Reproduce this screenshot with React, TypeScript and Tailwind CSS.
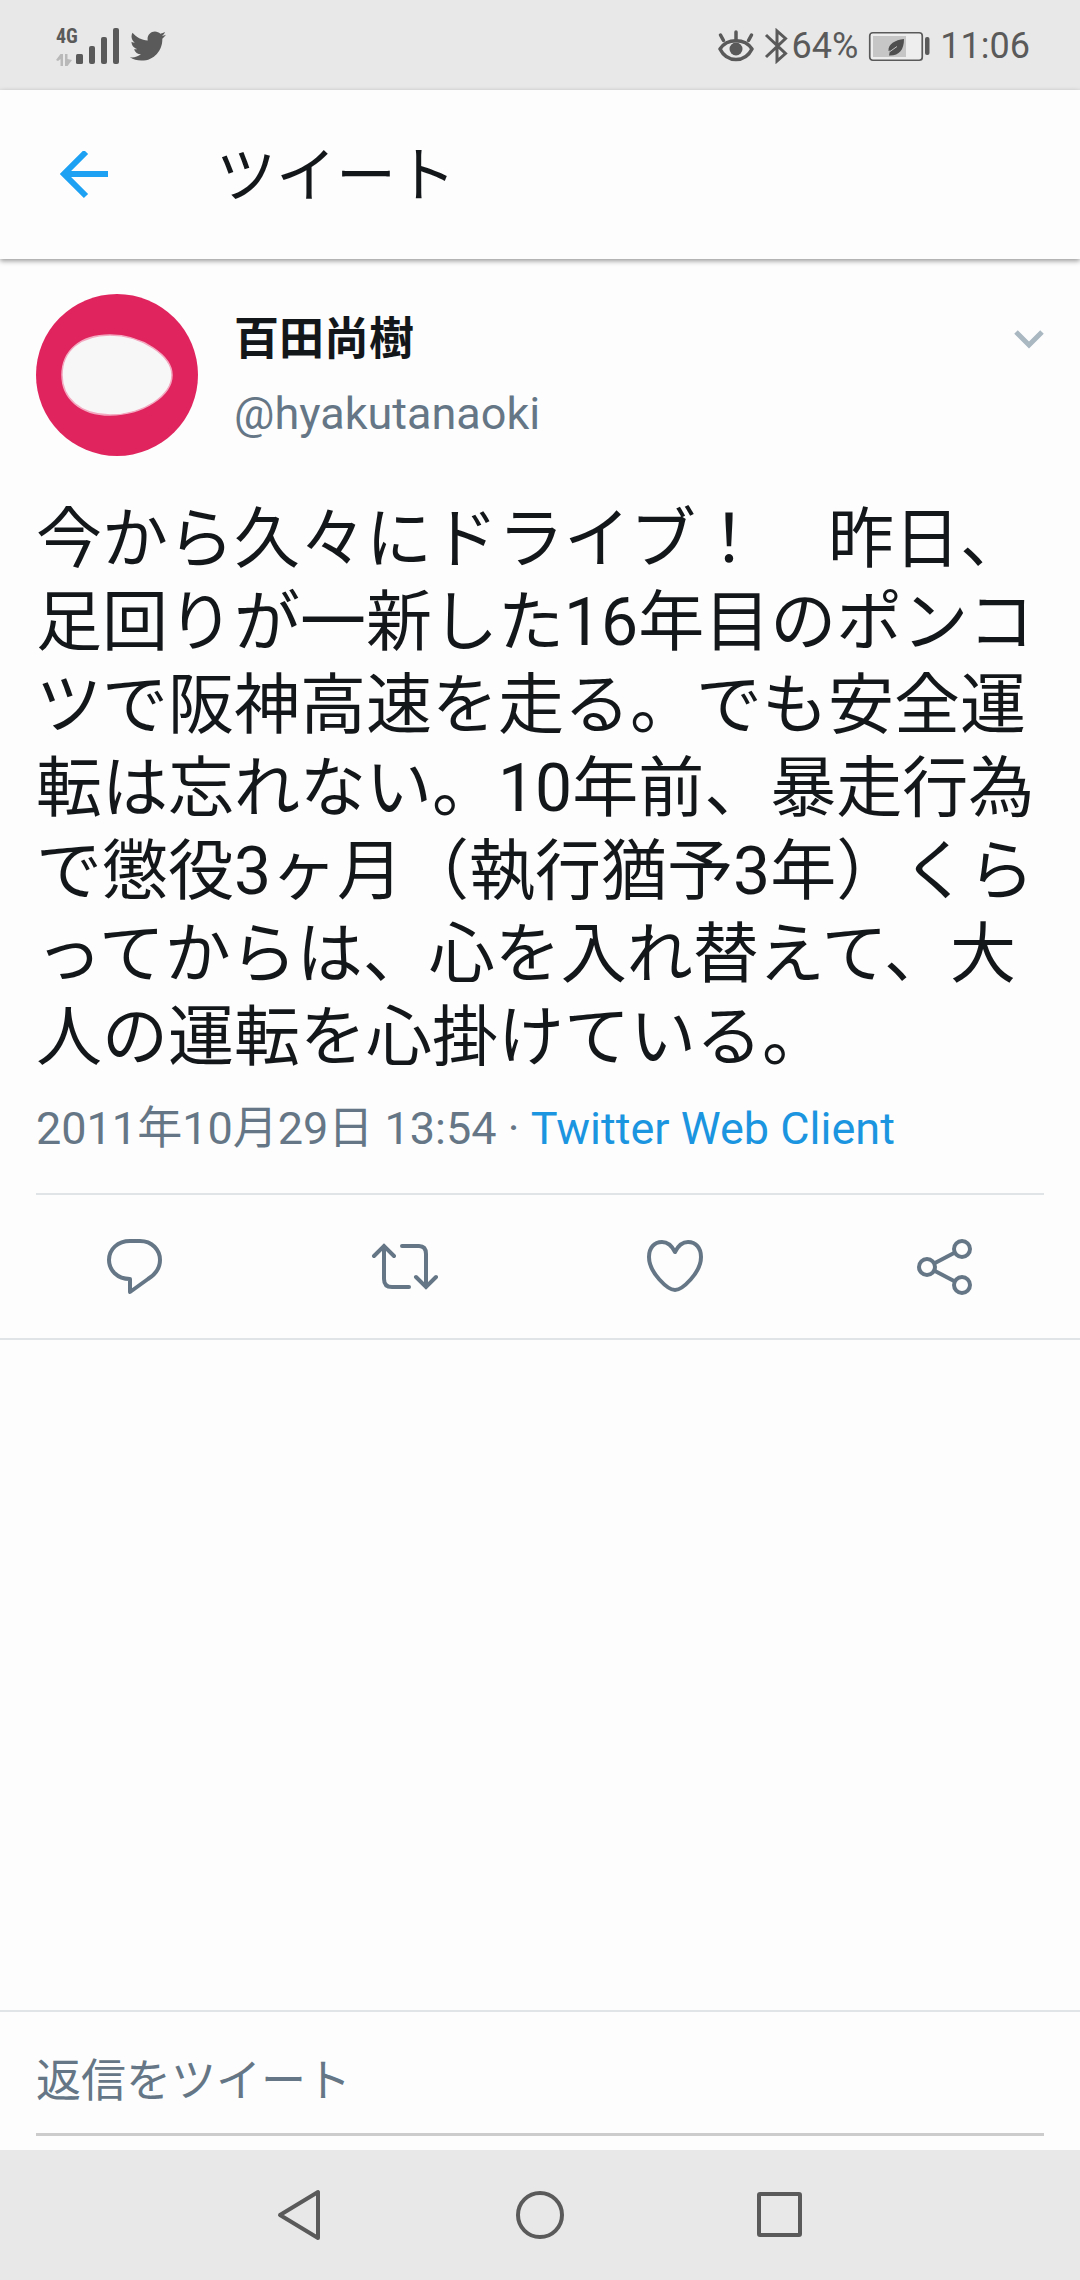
import { useState } from 'react';
import type { ReactNode } from 'react';
import { FaTwitter } from 'react-icons/fa';

interface Action {
  label: string;
  icon: ReactNode;
}

function SignalIcon() {
  return (
    <svg className="h-10 w-11" viewBox="0 0 44 40" fill="#5a5a5a" aria-hidden="true">
      <rect x="0" y="28" width="7" height="10" rx="1.5" />
      <rect x="13" y="20" width="6" height="18" rx="2" />
      <rect x="25" y="11" width="6" height="27" rx="2" />
      <rect x="37" y="2" width="6" height="36" rx="2" />
    </svg>
  );
}

function DataArrowsIcon() {
  return (
    <svg className="h-3 w-4" viewBox="0 0 16 12" fill="#b9b9b9" aria-hidden="true">
      <path d="M0 6 4.500 0H7v12H4.500V5L2 7zM9 0h2.500v5L16 6l-4.500 6H9z" />
    </svg>
  );
}

function EyeIcon() {
  return (
    <svg className="h-9 w-9" viewBox="0 0 36 36" fill="none" stroke="#5a5a5a" strokeWidth="3.500" aria-hidden="true">
      <path d="M2 21C9 10 27 10 34 21C27 35 9 35 2 21Z" strokeLinejoin="round" />
      <circle cx="18" cy="21" r="6.500" fill="#5a5a5a" stroke="none" />
      <path d="M18 12V4M5.500 12.500 2.500 7M30.500 12.500 33.500 7" strokeLinecap="round" />
    </svg>
  );
}

function BluetoothIcon() {
  return (
    <svg className="h-9 w-6" viewBox="0 0 24 36" fill="none" stroke="#5a5a5a" strokeWidth="3" aria-hidden="true">
      <path d="M2 7 21.500 25.500 13 33V3L21.500 10.500 2 29" />
    </svg>
  );
}

function BatteryIcon() {
  return (
    <svg className="h-8 w-16" viewBox="0 0 64 32" fill="none" aria-hidden="true">
      <rect x="1.750" y="2.750" width="52.500" height="27.500" rx="3" stroke="#5a5a5a" strokeWidth="1.700" fill="#eeeeee" />
      <rect x="5" y="6" width="33" height="21" fill="#c6c6c6" />
      <path d="M36 9C27 10 20 14 20.500 21L22 20.500 21 25.500C31 26 36 20 36 9Z" fill="#4f4f4f" />
      <path d="M22 21.500 29 16.500" stroke="#c6c6c6" strokeWidth="1" />
      <rect x="57" y="7" width="4.500" height="18" rx="2" fill="#5a5a5a" />
    </svg>
  );
}

function StatusBar() {
  return (
    <div className="flex h-[90px] items-center justify-between bg-[#e8e8e8] pt-0.5 pr-[50px] pl-14 text-[#5a5a5a]">
      <div className="flex items-center">
        <div className="flex h-10 w-5 flex-col items-start justify-between">
          <span className="font-['Roboto_Condensed','Roboto',sans-serif] text-[20px] leading-5 font-bold">4G</span>
          <DataArrowsIcon />
        </div>
        <SignalIcon />
        <FaTwitter className="ml-2.5 h-9 w-9" aria-hidden="true" />
      </div>
      <div className="flex items-center text-[36px] leading-10">
        <EyeIcon />
        <div className="ml-2.5 flex items-center">
          <BluetoothIcon />
          <span className="ml-1">64%</span>
        </div>
        <div className="ml-2.5 flex items-center gap-2">
          <BatteryIcon />
          <span>11:06</span>
        </div>
      </div>
    </div>
  );
}

function Header() {
  return (
    <header className="z-10 flex h-[169px] items-center bg-[#fdfdfd] pl-14 shadow-[0_2px_5px_rgba(0,0,0,0.4)]">
      <button type="button" aria-label="戻る" className="p-1">
        <svg className="h-12 w-12" viewBox="0 0 48 48" fill="none" stroke="#1da1f2" strokeWidth="6" aria-hidden="true">
          <path d="M26 1 4 23 26 45M4 23H48" />
        </svg>
      </button>
      <h1 className="ml-26 pt-1 text-[60px] leading-[72px] text-[#14171a]">ツイート</h1>
    </header>
  );
}

function Avatar() {
  return (
    <svg className="size-[162px] shrink-0" viewBox="0 0 162 162" role="img" aria-label="百田尚樹">
      <circle cx="81" cy="81" r="81" fill="#e0245e" />
      <path
        d="M26 81C26 57 44 41 74 41C106 41 136 62 136 81C136 101 108 121 74 121C44 121 26 104 26 81Z"
        fill="#f7f7f8"
        stroke="#f3a9c0"
        strokeWidth="1.500"
      />
    </svg>
  );
}

const iconClass = 'h-16 w-[72px]';

const actions: Action[] = [
  {
    label: '返信',
    icon: (
      <svg className={iconClass} viewBox="0 0 72 64" fill="none" stroke="#657786" strokeWidth="4" aria-hidden="true">
        <path
          d="M31 6H41C53 6 61 15 61 25C61 32 57 39 49 44L31 57V44C18 44 10 35 10 25C10 14 19 6 31 6Z"
          strokeLinejoin="round"
        />
      </svg>
    ),
  },
  {
    label: 'リツイート',
    icon: (
      <svg className={iconClass} viewBox="0 0 72 64" fill="none" stroke="#657786" strokeWidth="4" strokeLinecap="round" aria-hidden="true">
        <path d="M5 21 15 11 25 21M15 11V44Q15 52 23 52H40" />
        <path d="M33 11H50Q57 11 57 19V52M47 42 57 52 67 42" />
      </svg>
    ),
  },
  {
    label: 'いいね',
    icon: (
      <svg className={iconClass} viewBox="0 0 72 64" fill="none" stroke="#657786" strokeWidth="4" aria-hidden="true">
        <path
          d="M36 17C33 11 28 7 23 7C15 7 10 13 10 22C10 38 29 55 36 55C43 55 62 38 62 22C62 13 57 7 49 7C44 7 39 11 36 17Z"
          strokeLinejoin="round"
        />
      </svg>
    ),
  },
  {
    label: '共有',
    icon: (
      <svg className={iconClass} viewBox="0 0 72 64" fill="none" stroke="#657786" strokeWidth="4" aria-hidden="true">
        <circle cx="18" cy="32" r="8" />
        <circle cx="53" cy="14" r="8" />
        <circle cx="53" cy="50" r="8" />
        <path d="M25 28.500 46 17.500M25 35.500 46 46.500" />
      </svg>
    ),
  },
];

function Tweet() {
  return (
    <article className="border-b-2 border-[#e1e4e6] pt-[35px]">
      <div className="px-9">
        <div className="flex">
          <Avatar />
          <div className="ml-9 flex grow flex-col pt-3.5">
            <div className="flex items-center justify-between">
              <span className="text-[45px] leading-[64px] font-bold text-[#14171a]">百田尚樹</span>
              <button type="button" aria-label="メニュー">
                <svg className="h-8 w-8" viewBox="0 0 32 32" fill="none" stroke="#aab8c2" strokeWidth="5" aria-hidden="true">
                  <path d="M4 8 17 21 30 8" />
                </svg>
              </button>
            </div>
            <a href="#profile" className="mt-[14px] text-[45px] leading-[56px] text-[#657786]">
              @hyakutanaoki
            </a>
          </div>
        </div>
        <p className="mt-[42px] text-[66px] leading-[83px] text-[#14171a]">
          今から久々にドライブ！　昨日、足回りが一新した16年目のポンコツで阪神高速を走る。でも安全運転は忘れない。10年前、暴走行為で懲役3ヶ月（執行猶予3年）くらってからは、心を入れ替えて、大人の運転を心掛けている。
        </p>
        <p className="mt-5 border-b-2 border-[#e1e4e6] pb-[34px] text-[45px] leading-[60px] text-[#657786]">
          2011年10月29日 13:54 ·{' '}
          <a href="#source" className="text-[#1b95e0]">
            Twitter Web Client
          </a>
        </p>
      </div>
      <div className="grid h-[143px] grid-cols-4">
        {actions.map((action) => (
          <button key={action.label} type="button" aria-label={action.label} className="flex items-center justify-center">
            {action.icon}
          </button>
        ))}
      </div>
    </article>
  );
}

function ReplyBox() {
  const [text, setText] = useState('');

  return (
    <div className="border-t-2 border-[#e1e4e6] px-9 pt-8 pb-3.5">
      <input
        type="text"
        aria-label="返信をツイート"
        placeholder="返信をツイート"
        value={text}
        onChange={(e) => setText(e.target.value)}
        className="block h-[92px] w-full border-b-3 border-[#cccccc] bg-transparent pb-3.5 text-[45px] text-[#14171a] outline-none placeholder:text-[#657786]"
      />
    </div>
  );
}

function NavBar() {
  return (
    <nav className="flex h-[130px] items-center justify-center gap-48 bg-[#e8e8e8]">
      <button type="button" aria-label="戻る">
        <svg className="h-13 w-12" viewBox="0 0 48 52" fill="none" stroke="#5a5a5a" strokeWidth="4" strokeLinejoin="round" aria-hidden="true">
          <path d="M4 26 42 3V49Z" />
        </svg>
      </button>
      <button type="button" aria-label="ホーム">
        <svg className="h-13 w-12" viewBox="0 0 48 52" fill="none" stroke="#5a5a5a" strokeWidth="4" aria-hidden="true">
          <circle cx="24" cy="26" r="22" />
        </svg>
      </button>
      <button type="button" aria-label="アプリ履歴">
        <svg className="h-13 w-12" viewBox="0 0 48 52" fill="none" stroke="#5a5a5a" strokeWidth="4" strokeLinejoin="round" aria-hidden="true">
          <rect x="3" y="5" width="41" height="41" rx="1" />
        </svg>
      </button>
    </nav>
  );
}

export default function App() {
  return (
    <div className="flex min-h-screen flex-col bg-[#fdfdfd] font-['Roboto','Noto_Sans_CJK_JP',sans-serif]" lang="ja">
      <StatusBar />
      <Header />
      <main className="flex grow flex-col justify-between">
        <Tweet />
        <ReplyBox />
      </main>
      <NavBar />
    </div>
  );
}
